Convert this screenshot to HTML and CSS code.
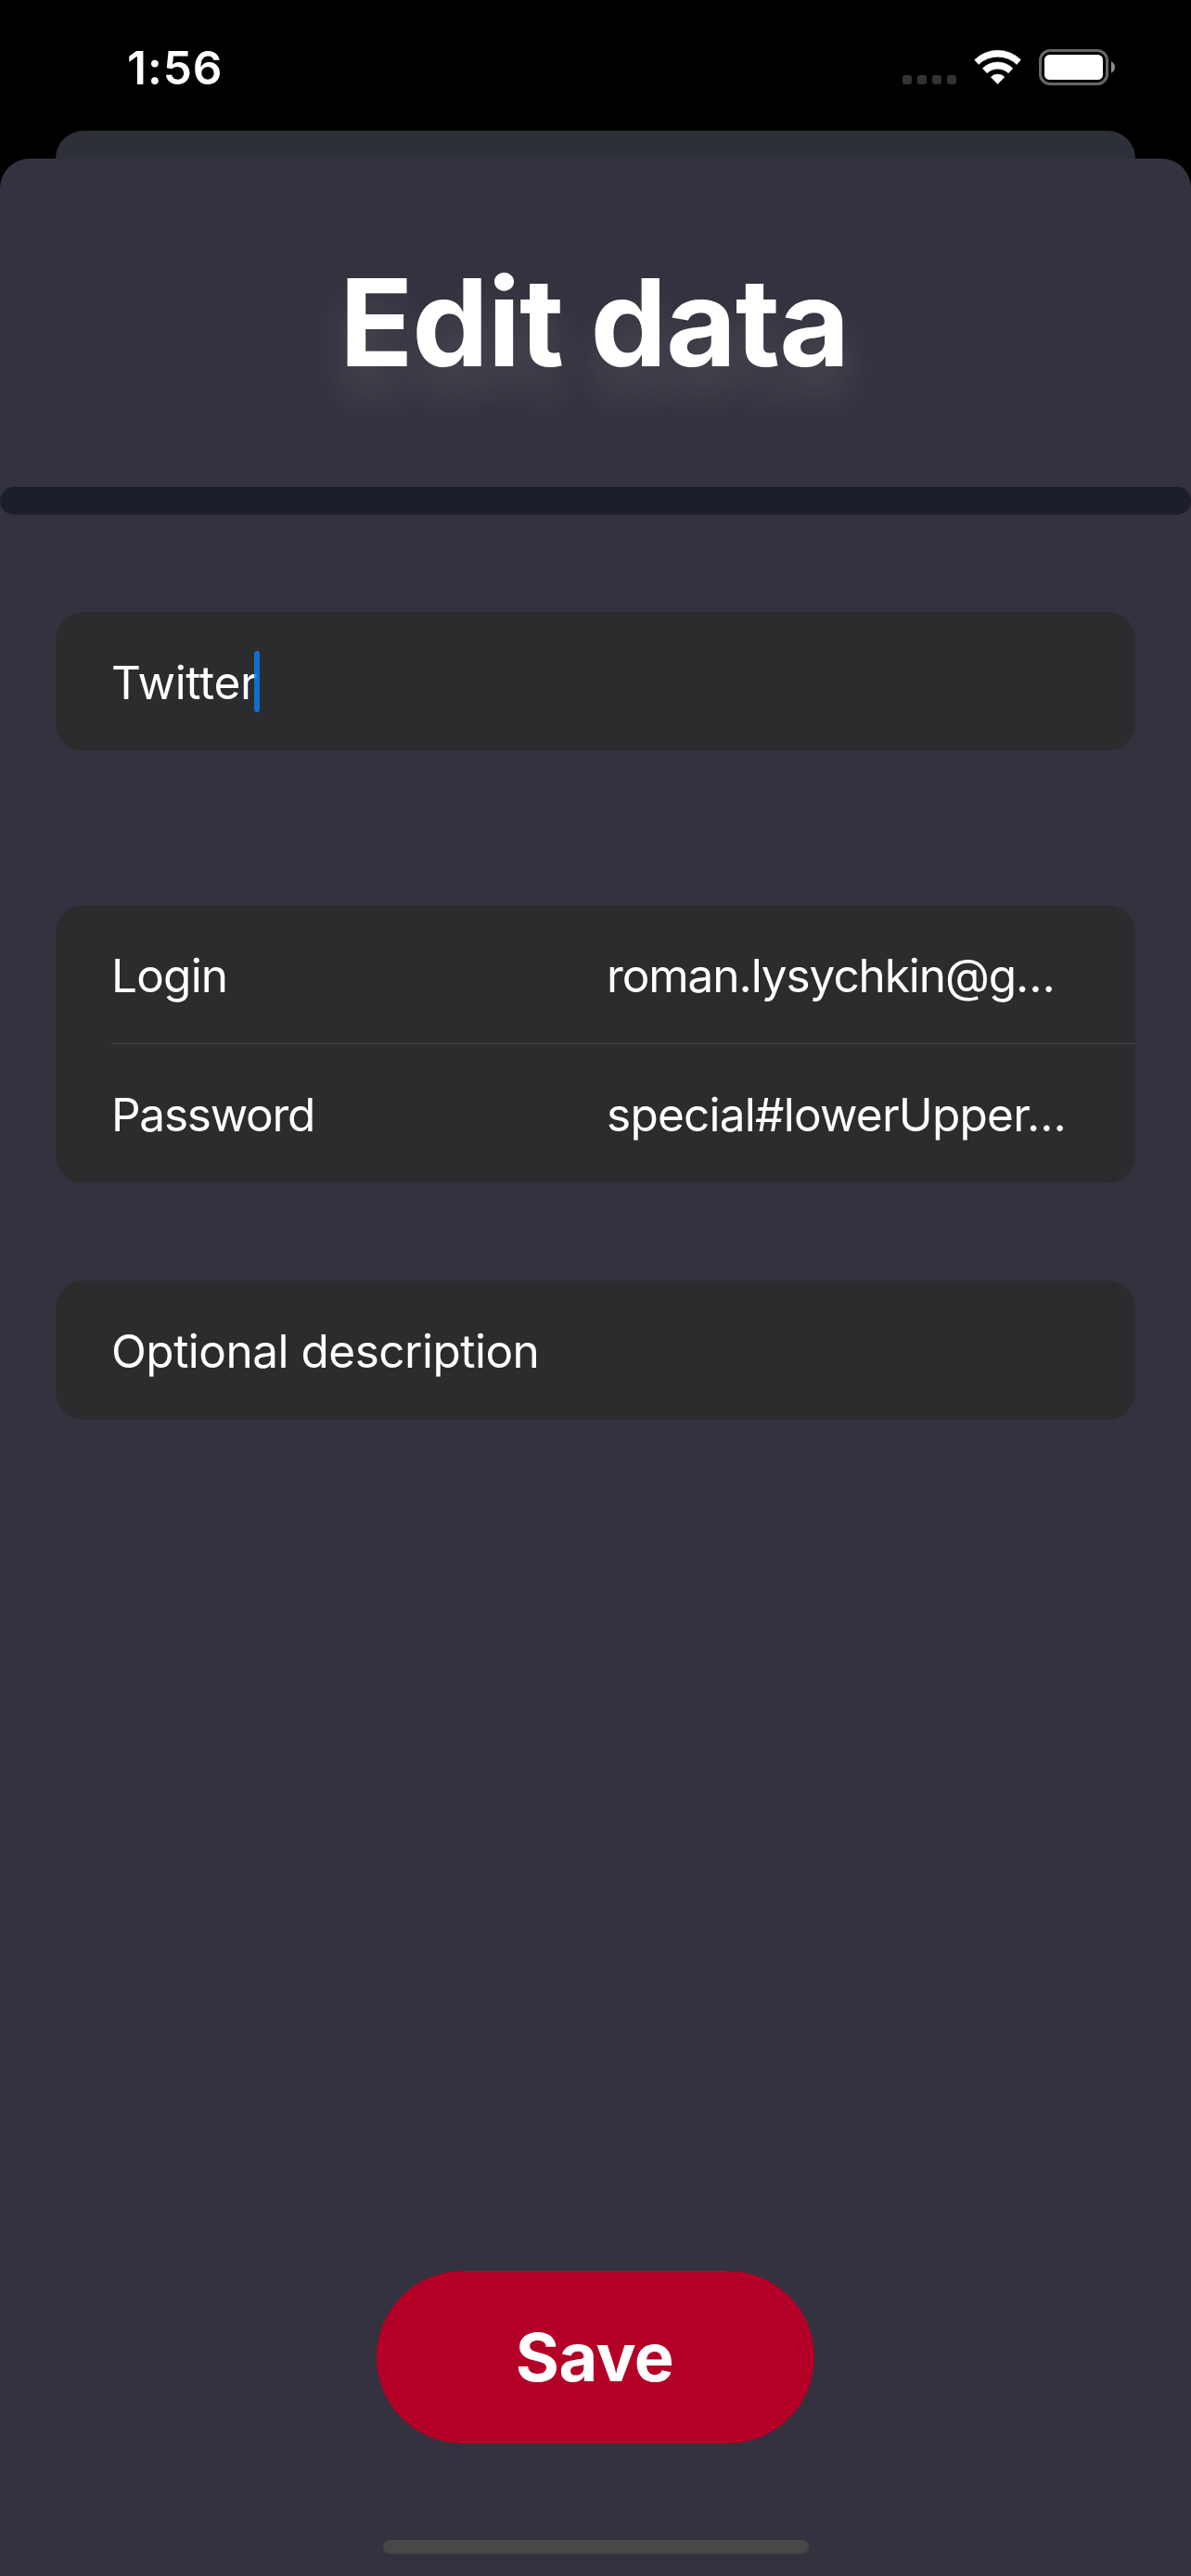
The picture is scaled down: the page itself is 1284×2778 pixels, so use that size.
FILE: index.html
```
<!DOCTYPE html>
<html lang="en">
<head>
<meta charset="utf-8">
<title>Edit data</title>
<link rel="stylesheet" href="styles.css">
</head>
<body>
<div class="screen">
  <header class="status-bar">
    <span class="time">1:56</span>
    <svg class="status-icons" viewBox="973 53 230 40" width="230" height="40" aria-hidden="true">
      <g fill="#333">
        <rect x="973" y="81" width="10" height="10" rx="3"/>
        <rect x="989" y="81" width="10" height="10" rx="3"/>
        <rect x="1005" y="81" width="10" height="10" rx="3"/>
        <rect x="1021" y="81" width="10" height="10" rx="3"/>
      </g>
      <g fill="#fff" stroke="#fff" stroke-width=".6" stroke-linejoin="round">
        <path d="M1050.8 64.4A35.5 35.5 0 0 1 1100.4 64.4L1096.2 69.4A30 30 0 0 0 1055 69.4Z"/>
        <path d="M1059.4 73.7A23 23 0 0 1 1091.8 73.7L1087.2 78.7A17 17 0 0 0 1064 78.7Z"/>
        <path d="M1068.3 83A10.5 10.5 0 0 1 1082.9 83L1075.6 90.6Z"/>
      </g>
      <rect x="1121.5" y="54.5" width="72" height="36" rx="10.5" fill="none" stroke="#666" stroke-width="3"/>
      <rect x="1126" y="59" width="63" height="27" rx="5.5" fill="#fff"/>
      <path d="M1198 66.3Q1202 68.5 1202 72.5T1198 78.7Z" fill="#8c8c8c"/>
    </svg>
  </header>
  <div class="back-sheet"></div>
  <main class="sheet">
    <h1 class="title">Edit data</h1>
    <div class="divider-bar"></div>
    <form class="form">
      <section class="card card-name">
        <div class="row"><span class="name">Twitter</span><i class="caret"></i></div>
      </section>
      <section class="card card-credentials">
        <div class="row"><span class="label login">Login</span><span class="value email">roman.lysychkin@g…</span></div>
        <div class="row row-divided"><span class="label password">Password</span><span class="value secret">special#lowerUpper…</span></div>
      </section>
      <section class="card">
        <div class="row"><span class="description">Optional description</span></div>
      </section>
    </form>
    <button class="save" type="button">Save</button>
    <div class="home-indicator"></div>
  </main>
</div>
</body>
</html>
```
FILE: styles.css
```
* {
  box-sizing: border-box;
}

body {
  margin: 0;
  background: #000;
  color: #fff;
  font-family: Inter, "Liberation Sans", sans-serif;
}

.screen {
  display: flex;
  flex-direction: column;
  height: 2778px;
  width: 1284px;
  overflow: hidden;
}

.status-bar {
  display: flex;
  justify-content: space-between;
  align-items: flex-start;
  height: 141px;
  padding: 5px 81px 0 137px;
}

.time {
  font-size: 49.5px;
  font-weight: 600;
  letter-spacing: 1px;
  line-height: 136px;
}

.status-icons {
  margin-top: 48px;
}

.back-sheet {
  height: 30px;
  margin: 0 60px;
  border-radius: 30px 30px 0 0;
  background: #2e3039;
}

.sheet {
  flex: 1;
  display: flex;
  flex-direction: column;
  align-items: center;
  padding-bottom: 24px;
  border-radius: 32px 32px 0 0;
  background: #33323e;
}

.title {
  margin: 0;
  padding-right: 3px;
  font-size: 131px;
  font-weight: 700;
  letter-spacing: -1.2px;
  line-height: 354px;
  text-shadow: 0 30px 40px rgba(255, 255, 255, 0.12);
}

.divider-bar {
  width: 100%;
  height: 30px;
  border-radius: 15px;
  background: #1c1e29;
}

.form {
  align-self: stretch;
  display: flex;
  flex-direction: column;
  padding: 105px 60px 0;
}

.card {
  border-radius: 30px;
  background: #2c2c2e;
  font-size: 49.5px;
}

.card-name {
  margin-bottom: 166px;
}

.card-credentials {
  margin-bottom: 105px;
}

.row {
  position: relative;
  display: flex;
  align-items: center;
  height: 150px;
  padding: 2px 60px 0;
  white-space: nowrap;
}

.row-divided::before {
  content: "";
  position: absolute;
  top: -1px;
  left: 60px;
  right: 0;
  height: 1px;
  background: #464649;
}

.label {
  width: 534px;
}

.name {
  letter-spacing: -0.33px;
}

.login {
  letter-spacing: -0.8px;
}

.password {
  letter-spacing: -1.25px;
}

.email {
  letter-spacing: -1.08px;
}

.secret {
  letter-spacing: -0.75px;
}

.description {
  letter-spacing: -0.5px;
}

.caret {
  position: absolute;
  top: 42px;
  left: 214px;
  width: 6px;
  height: 66px;
  border-radius: 3px;
  background: rgba(10, 122, 240, 0.85);
}

.save {
  width: 472px;
  height: 186px;
  margin: auto 0 104px;
  padding: 0 2px 0 0;
  border: 0;
  border-radius: 93px;
  background: #b40026;
  color: #fff;
  font: 700 72px/186px Inter, "Liberation Sans", sans-serif;
  letter-spacing: -0.5px;
}

.home-indicator {
  width: 459px;
  height: 15px;
  border-radius: 7.5px;
  background: #484847;
}
```
